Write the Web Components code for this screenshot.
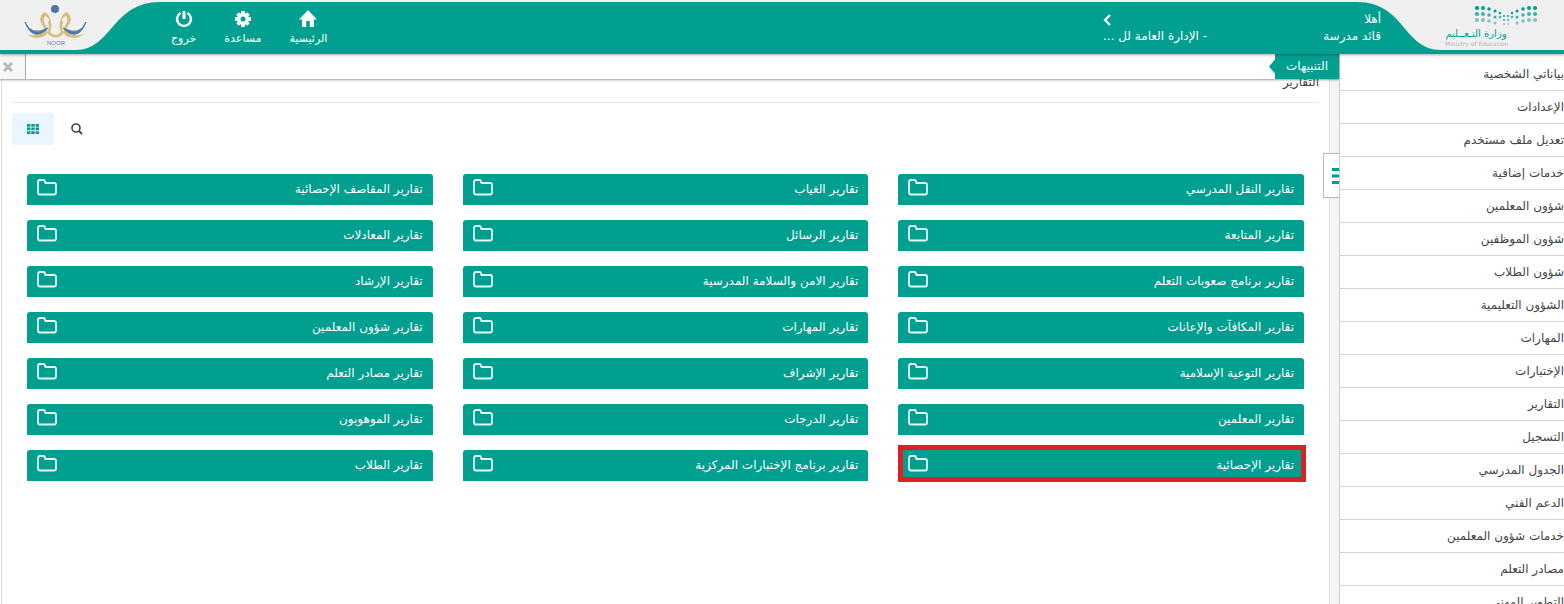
<!DOCTYPE html>
<html lang="ar" dir="rtl">
<head>
<meta charset="utf-8">
<title>نور - التقارير</title>
<style>
  html { --green: #009f8f; --text: #444; --line: #d4d4d4; }
  body { margin: 0; height: 100vh; overflow: hidden; background: #fff; color: var(--text);
    font: 12px/20px "DejaVu Sans", sans-serif; }
</style>
</head>
<body>
<noor-app></noor-app>
<script>
const define = (name, html, setup) => customElements.define(name, class extends HTMLElement {
  connectedCallback() {
    if (this.shadowRoot) return;
    const root = this.attachShadow({ mode: 'open' });
    root.innerHTML = '<style>*{box-sizing:border-box}</style>' + html;
    if (setup) setup(root, this);
  }
});

define('ministry-logo', `
<style>
  :host { display: block; width: 207px; height: 48px; position: relative; color: var(--green); }
  .curve { display: block; }
  .mark { position: absolute; top: 3px; left: 88px; width: 94px; direction: ltr; }
  .mark svg { display: block; margin-left: 30px; }
  .ar { font-size: 10px; line-height: 13px; width: 62px; text-align: center; direction: rtl; white-space: nowrap; display: flex; justify-content: center; }
  .en { font: 6px/8px "DejaVu Sans", sans-serif; color: #b4b4b4; width: 62px; white-space: nowrap; }
</style>
<svg class="curve" width="207" height="48" viewBox="0 0 207 48"><path d="M0 0C48 0 46 48 84 48H207V0Z" fill="#f0f0f0"/></svg>
<div class="mark"><svg id="dots" width="64" height="22" viewBox="0 0 64 22" fill="currentColor"></svg>
<div class="ar">وزارة التـعــليم</div><div class="en">Ministry of Education</div></div>`,
root => {
  const cols = [[2, 3, 2.1], [8, 3, 2], [14, 4, 1.8], [20, 6, 1.5], [25, 8, 1.2], [29, 11, 1]];
  let s = '';
  for (let r = 0; r < 3; r++) cols.forEach(([x, y, q], i) => {
    if (r === 2 && i === 4) return;
    const cy = y + r * (i > 3 ? 4 : 6), o = 1 - r * .25;
    s += `<circle cx="${x}" cy="${cy}" r="${q}" opacity="${o}"/><circle cx="${62 - x}" cy="${cy}" r="${q}" opacity="${o}"/>`;
  });
  root.getElementById('dots').innerHTML = s;
});

define('noor-logo', `
<style>:host { display: block; width: 160px; height: 48px; } svg { display: block; }</style>
<svg width="160" height="48" viewBox="0 0 160 48" role="img" aria-label="NOOR">
  <path d="M0 0H160C112 0 112 48 76 48H0Z" fill="#f0f0f0"/>
  <g fill="#d8bd7c">
    <path d="M27 32Q36 35 42 31Q46 28 43 24Q37 16 44 10Q49 11 51 20Q48 15 45 14Q42 17 46 24Q50 33 42 35Q34 38 27 32Z"/>
    <path d="M84 32Q75 35 69 31Q65 28 68 24Q74 16 67 10Q62 11 60 20Q63 15 66 14Q69 17 65 24Q61 33 69 35Q77 38 84 32Z"/>
    <path d="M50 17Q53 24 50 30Q56 36 61 30Q58 24 61 17L63 20Q61 25 64 31Q56 40 47 31Q50 25 48 20Z"/>
  </g>
  <path d="M25 20Q31 35 48 26Q33 41 25 20ZM86 20Q80 35 63 26Q78 41 86 20Z" fill="#4b77a8" stroke="#4b77a8"/>
  <circle cx="55" cy="7" r="4" fill="#4b77a8"/>
  <text x="56" y="43" text-anchor="middle" direction="ltr" font-family="Liberation Sans" font-size="6" fill="#66809e">NOOR</text>
</svg>`);

define('nav-action', `
<style>
  :host { display: block; }
  a { display: flex; flex-direction: column; align-items: center; color: #fff; text-decoration: none; font-size: 11px; line-height: 20px; white-space: nowrap; }
  ::slotted(svg) { display: block; }
</style><a href="#"><slot name="icon"></slot><span><slot></slot></span></a>`);

define('app-header', `
<style>
  :host { display: flex; height: 54px; background: var(--green); border-top: 2px solid #f0f0f0; color: #fff; box-shadow: 0 1px 3px #0005; position: relative; z-index: 3; }
  .user { width: 278px; margin-inline-start: -24px; padding-top: 9px; line-height: 17px; }
  .row { display: flex; justify-content: space-between; align-items: center; white-space: nowrap; height: 17px; }
  button { border: 0; padding: 0; background: none; color: #fff; display: block; width: 10px; height: 14px; }
  nav { margin-inline-start: auto; display: flex; gap: 28px; padding-top: 7px; padding-left: 11px; }
</style>
<ministry-logo></ministry-logo>
<div class="user">
  <div class="row"><span>أهلا</span><button aria-label="رجوع"><svg width="10" height="14" viewBox="0 0 10 14"><path d="M7 2 2 7 7 12" fill="none" stroke="#fff" stroke-width="2.2"/></svg></button></div>
  <div class="row"><span>قائد مدرسة</span><span>- الإدارة العامة لل ...</span></div>
</div>
<nav>
  <nav-action><svg slot="icon" width="20" height="20" viewBox="0 0 20 20" fill="#fff"><path d="M10 1 1 10.500H4V18H8.200V12H11.800V18H16V10.500H19Z"/></svg>الرئيسية</nav-action>
  <nav-action><svg slot="icon" width="20" height="20" viewBox="0 0 20 20"><g stroke="#fff" stroke-width="3.800"><path d="M10 2V18M2 10H18M4.500 4.500 15.500 15.500M15.500 4.500 4.500 15.500"/></g><circle cx="10" cy="10" r="6" fill="#fff"/><circle cx="10" cy="10" r="2.500" fill="#009f8f"/></svg>مساعدة</nav-action>
  <nav-action><svg slot="icon" width="20" height="20" viewBox="0 0 20 20" fill="none" stroke="#fff" stroke-width="2.500"><path d="M6.500 4A7 7 0 1 0 13.500 4"/><path d="M10 2V10" stroke-width="3"/></svg>خروج</nav-action>
</nav>
<noor-logo></noor-logo>`);

define('alert-bar', `
<style>
  :host { display: flex; height: 25px; background: #fff; box-shadow: 0 1px 2px #0006; }
  .tag { width: 64px; background: var(--green); color: #fff; font-size: 12px; line-height: 25px; text-align: center; }
  .arrow { width: 6px; height: 14px; align-self: center; background: var(--green); clip-path: polygon(100% 0, 100% 100%, 0 50%); }
  button { margin-inline-start: auto; width: 26px; border: 0; border-right: 1px solid #aaa; background: #f7f7f7; padding: 0 3px; display: flex; justify-content: flex-end; align-items: center; }
  svg { display: block; }
</style>
<div class="tag">التنبيهات</div><div class="arrow"></div>
<button aria-label="إغلاق"><svg width="10" height="10" viewBox="0 0 10 10"><path d="M1 1 9 9M9 1 1 9" stroke="#b8b8b8" stroke-width="3"/></svg></button>`);

define('side-item', `
<style>
  :host { display: block; border-bottom: 1px solid var(--line); }
  a { display: block; height: 32px; line-height: 32px; color: var(--text); text-decoration: none; white-space: nowrap; }
</style><a href="#"><slot></slot></a>`);

define('side-menu', `
<style>
  :host { display: block; width: 225px; flex: none; padding-top: 4px; border-left: 1px solid #ccc; background: #fff; overflow: hidden; }
</style><nav id="list"></nav>`,
root => {
  root.getElementById('list').innerHTML = ['بياناتي الشخصية','الإعدادات','تعديل ملف مستخدم','خدمات إضافية','شؤون المعلمين','شؤون الموظفين','شؤون الطلاب','الشؤون التعليمية','المهارات','الإختبارات','التقارير','التسجيل','الجدول المدرسي','الدعم الفني','خدمات شؤون المعلمين','مصادر التعلم','التطوير المهني']
    .map(t => `<side-item>${t}</side-item>`).join('');
});

define('report-card', `
<style>
  :host { display: block; position: relative; }
  a { display: flex; justify-content: space-between; align-items: flex-start; height: 31px; padding: 5px 10px 0; background: var(--green); color: #fff; border-radius: 3px 3px 0 0; text-decoration: none; white-space: nowrap; line-height: 20px; }
  svg { display: block; }
  :host([selected])::after { content: ""; position: absolute; inset: -5px -2px -1px 0; border: 5px solid #dd1f26; pointer-events: none; }
</style>
<a href="#"><span><slot></slot></span><svg width="20" height="17" viewBox="0 0 20 17"><path d="M1 3Q1 1 3 1H6.500Q8 1 8 3L8.500 4H17Q19 4 19 6V13.500Q19 15.500 17 15.500H3Q1 15.500 1 13.500Z" fill="none" stroke="#e6fffb" stroke-width="1.800"/></svg></a>`);

define('report-grid', `
<style>:host { display: grid; grid-template-columns: repeat(3, minmax(0, 1fr)); gap: 15px 30px; padding: 29px 15px 0; }</style><slot></slot>`);

define('report-tools', `
<style>
  :host { display: flex; justify-content: flex-end; padding-top: 10px; gap: 2px; }
  button { width: 42px; height: 32px; border: 0; border-radius: 3px; background: none; padding: 0; display: grid; place-items: center; }
  .on { background: #e9f6fd; }
</style>
<button aria-label="بحث"><svg width="12" height="12" viewBox="0 0 12 12" fill="none" stroke="#444"><circle cx="5" cy="5" r="4" stroke-width="1.600"/><path d="M8 8 11 11" stroke-width="2"/></svg></button>
<button class="on" aria-label="عرض شبكي"><svg width="12" height="10" viewBox="0 0 12 10" fill="#009f8f"><path d="M0 0H3.400V2.700H0ZM4.300 0H7.700V2.700H4.300ZM8.600 0H12V2.700H8.600ZM0 3.600H3.400V6.300H0ZM4.300 3.600H7.700V6.300H4.300ZM8.600 3.600H12V6.300H8.600ZM0 7.200H3.400V10H0ZM4.300 7.200H7.700V10H4.300ZM8.600 7.200H12V10H8.600Z"/></svg></button>`);

define('menu-toggle', `
<style>
  :host { display: block; width: 9px; flex: none; background: #f4f4f4; position: relative; }
  button { position: absolute; top: 99px; left: -7px; width: 16px; height: 45px; border: 1px solid #bbb; border-right: 0; background: #fff; padding: 0 0 0 8px; }
  svg { display: block; }
</style>
<button aria-label="القائمة"><svg width="7" height="16" viewBox="0 0 7 16" fill="#009f8f"><path d="M0 0H7V3H0ZM0 6.500H7V9.500H0ZM0 13H7V16H0Z"/></svg></button>`);

define('noor-app', `
<style>
  :host { display: flex; flex-direction: column; height: 100%; }
  .body { flex: 1; min-height: 0; display: flex; }
  .work { flex: 1; min-width: 0; display: flex; position: relative; }
  alert-bar { position: absolute; top: 0; left: 0; right: 0; z-index: 2; }
  main { flex: 1; min-width: 0; padding: 18px 10px 0; margin-left: 1px; border: solid #ddd; border-width: 0 1px; }
  h1 { margin: 0; font-size: 12px; font-weight: normal; line-height: 20px; padding-bottom: 10px; border-bottom: 1px solid #e6e6e6; }
</style>
<app-header></app-header>
<div class="body">
  <side-menu></side-menu>
  <div class="work">
    <alert-bar></alert-bar>
    <menu-toggle></menu-toggle>
    <main><h1>التقارير</h1><report-tools></report-tools>
      <report-grid id="g"></report-grid></main>
  </div>
</div>`,
root => {
  root.getElementById('g').innerHTML = ['النقل المدرسي','الغياب','المقاصف الإحصائية','المتابعة','الرسائل','المعادلات','برنامج صعوبات التعلم','الامن والسلامة المدرسية','الإرشاد','المكافآت والإعانات','المهارات','شؤون المعلمين','التوعية الإسلامية','الإشراف','مصادر التعلم','المعلمين','الدرجات','الموهوبون','الإحصائية','برنامج الإختبارات المركزية','الطلاب']
    .map((t, i) => `<report-card${i === 18 ? ' selected' : ''}>تقارير ${t}</report-card>`).join('');
});
</script>
</body>
</html>
